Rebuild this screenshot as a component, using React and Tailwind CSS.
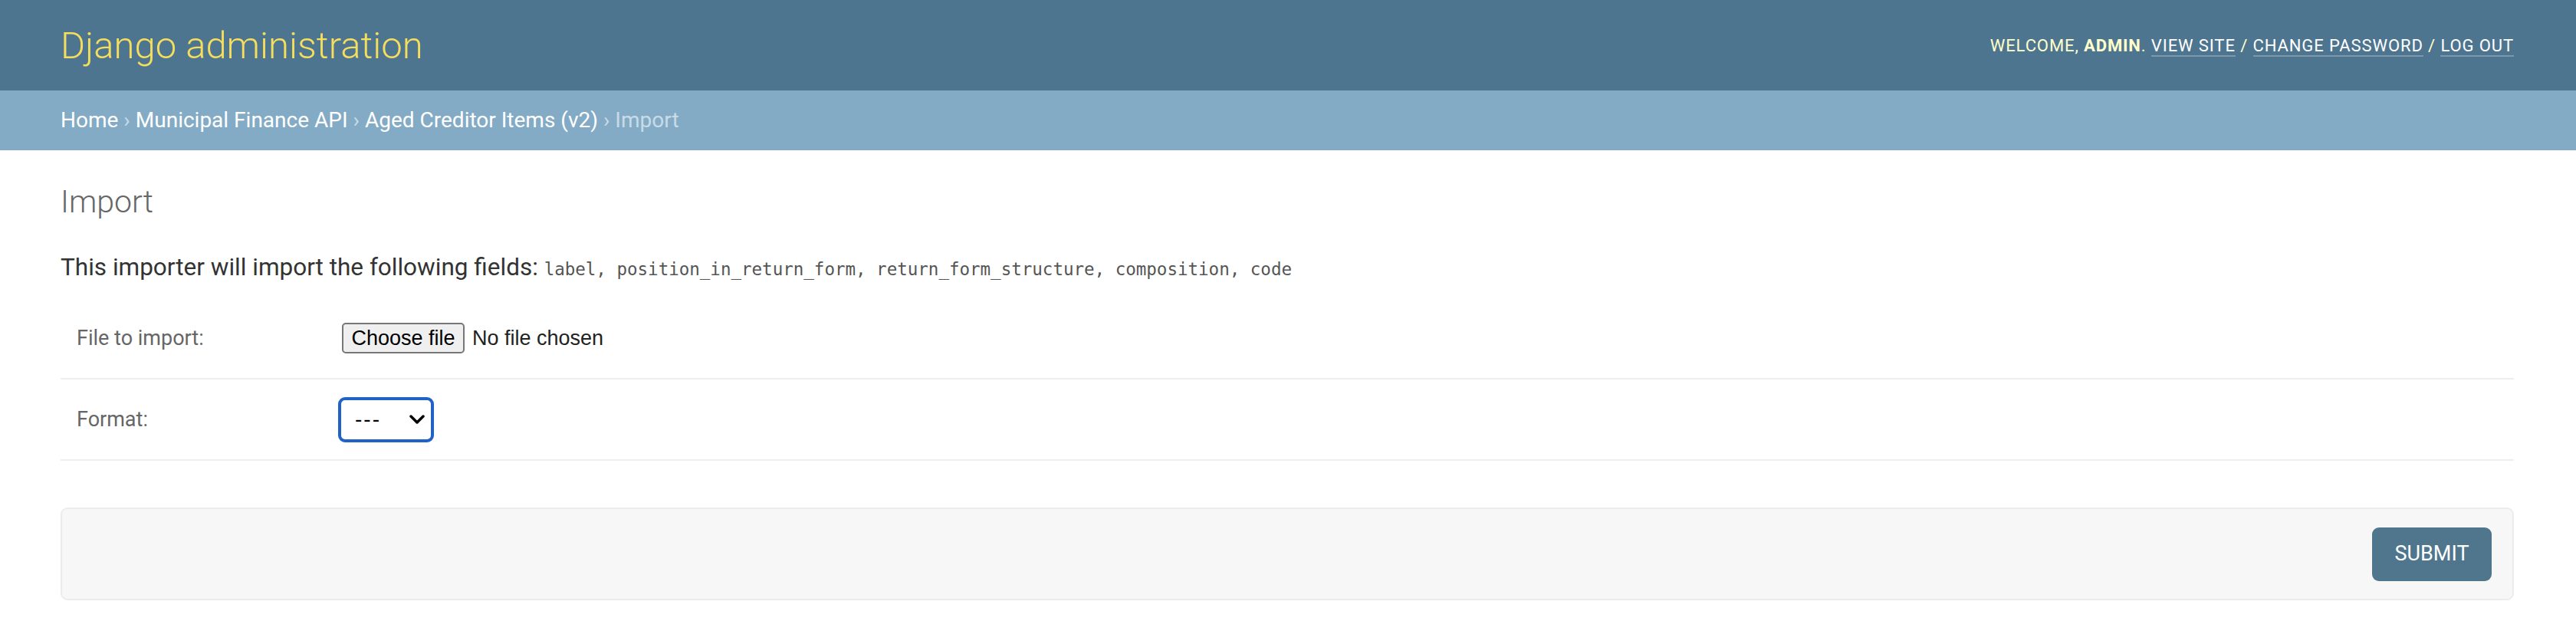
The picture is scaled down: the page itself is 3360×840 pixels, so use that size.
import { Fragment } from 'react'

const fields = ['label', 'position_in_return_form', 'return_form_structure', 'composition', 'code']

const crumbs = ['Home', 'Municipal Finance API', 'Aged Creditor Items (v2)']

function Header() {
  return (
    <div className="flex h-[118px] items-center justify-between bg-[#4e758f] pl-[79px] pr-[81px]">
      <h1 className="text-[49px] font-light leading-none text-[#f5dd5d]">Django administration</h1>
      <div className="text-[22px] uppercase tracking-[0.9px] text-[#ffffcc]">
        Welcome, <strong className="font-bold">admin</strong>.{' '}
        <a className="border-b-2 border-[#7c98ad] text-white">View site</a> /{' '}
        <a className="border-b-2 border-[#7c98ad] text-white">Change password</a> /{' '}
        <a className="border-b-2 border-[#7c98ad] text-white">Log out</a>
      </div>
    </div>
  )
}

function Breadcrumbs() {
  return (
    <div className="flex h-[78px] items-center bg-[#83abc5] px-[79px] text-[28px] text-[#c8dbe7]">
      {crumbs.map((c) => (
        <Fragment key={c}>
          <a className="text-white">{c}</a>
          <span className="mx-[7px]">›</span>
        </Fragment>
      ))}
      <span>Import</span>
    </div>
  )
}

function FormRow({ label, children }) {
  return (
    <div className="flex h-[106px] items-center border-b-2 border-[#eeeeee] px-[21px]">
      <label className="w-[346px] text-[27px] text-[#666666]">{label}</label>
      {children}
    </div>
  )
}

export default function App() {
  return (
    <div className="min-h-[840px] bg-white font-['Roboto',sans-serif] text-[#333333]">
      <Header />
      <Breadcrumbs />

      <div className="pl-[79px] pr-[81px] pt-[42px]">
        <h1 className="mb-[41px] text-[41px] font-light leading-[50px] text-[#666666]">Import</h1>

        <p className="mb-[18px] text-[31.5px] leading-[40px] text-[#333333]">
          This importer will import the following fields:{' '}
          {fields.map((f, i) => (
            <Fragment key={f}>
              <code className="font-['DejaVu_Sans_Mono',monospace] text-[22.5px] text-[#555555]">{f}</code>
              {i < fields.length - 1 && (
                <span className="font-['DejaVu_Sans_Mono',monospace] text-[22.5px] text-[#555555]">, </span>
              )}
            </Fragment>
          ))}
        </p>

        <FormRow label="File to import:">
          {/* file input drawn by hand so the label matches */}
          <div className="flex items-center font-['Liberation_Sans',Arial,sans-serif] text-[27px]">
            <span className="flex h-[40px] w-[160px] items-center justify-center rounded-[5px] border-2 border-[#777777] bg-[#efefef] text-black">
              Choose file
            </span>
            <span className="ml-[10px] text-[#222222]">No file chosen</span>
          </div>
        </FormRow>

        <FormRow label="Format:">
          <div className="-ml-[5px] flex h-[59px] w-[125px] items-center justify-between rounded-[9px] border-[4px] border-[#2062c6] bg-white pl-[18px] pr-[8px] font-['Liberation_Sans',Arial,sans-serif] text-[28px] text-black">
            <span className="tracking-[2px]">---</span>
            <svg width="20" height="14" viewBox="0 0 20 14" fill="none">
              <polyline points="2,3 10,11 18,3" stroke="black" strokeWidth="3.5" strokeLinecap="round" strokeLinejoin="round" />
            </svg>
          </div>
        </FormRow>

        <div className="mt-[61px] flex h-[121px] items-center justify-end rounded-[9px] border-2 border-[#ececec] bg-[#f7f7f7] pr-[27px]">
          <button className="flex h-[70px] w-[156px] items-center justify-center rounded-[9px] bg-[#4f768d] text-[27px] uppercase text-white">
            Submit
          </button>
        </div>
      </div>
    </div>
  )
}
